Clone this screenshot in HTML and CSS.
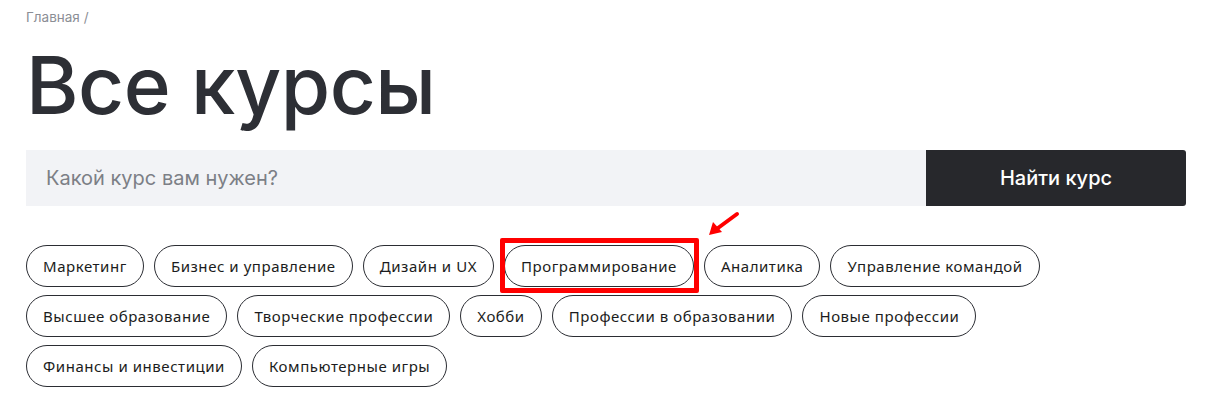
FILE: index.html
```html
<!DOCTYPE html>
<html lang="ru">
<head>
<meta charset="utf-8">
<title>Все курсы</title>
<link rel="stylesheet" href="styles.css">
</head>
<body>
<main class="page">
  <nav class="crumbs"><a href="#">Главная</a> <span>/</span></nav>
  <h1 class="title">Все курсы</h1>
  <form class="search">
    <input class="search-input" type="text" placeholder="Какой курс вам нужен?">
    <button class="search-btn" type="button">Найти курс</button>
  </form>
  <div class="chips">
    <a class="chip" href="#">Маркетинг</a>
    <a class="chip" href="#">Бизнес и управление</a>
    <a class="chip" href="#">Дизайн и UX</a>
    <a class="chip chip-marked" href="#">Программирование
      <svg class="arrow" width="40" height="32" viewBox="0 0 40 32"><path d="M33 4 L14 18" stroke="#f00" stroke-width="4" stroke-linecap="round"/><path d="M5 25 L9 12 L18 22 Z" fill="#f00"/></svg>
    </a>
    <a class="chip" href="#">Аналитика</a>
    <a class="chip" href="#">Управление командой</a>
    <a class="chip" href="#">Высшее образование</a>
    <a class="chip" href="#">Творческие профессии</a>
    <a class="chip" href="#">Хобби</a>
    <a class="chip" href="#">Профессии в образовании</a>
    <a class="chip" href="#">Новые профессии</a>
    <a class="chip" href="#">Финансы и инвестиции</a>
    <a class="chip" href="#">Компьютерные игры</a>
  </div>
</main>
</body>
</html>
```
FILE: styles.css
```css
* { box-sizing: border-box; }
html, body { margin: 0; padding: 0; background: #fff; }
body { font-family: "Noto Sans", "Open Sans", sans-serif; color: #2b2d33; }
.page { padding: 8px 32px 0 26px; }
.crumbs { font-family: Inter, sans-serif; font-size: 13.5px; line-height: 19px; color: #8b8e95; }
.crumbs a { color: #8b8e95; text-decoration: none; }
.title {
  margin: 10px 0 0 0;
  font-family: Inter, sans-serif;
  font-weight: 500;
  font-size: 80px;
  line-height: 96px;
  letter-spacing: -0.5px;
  color: #2d2f35;
}
.search { display: flex; margin-top: 17px; height: 56px; }
.search-input {
  flex: 1; border: 0; outline: 0;
  background: #f2f3f6; padding: 0 20px;
  font-family: Inter, sans-serif; font-size: 20px; color: #2b2d33;
}
.search-input::placeholder { color: #7c7f86; }
.search-btn {
  width: 260px; border: 0; border-radius: 0 3px 3px 0;
  background: #27282c; color: #fff;
  font-family: Inter, sans-serif; font-size: 20px; font-weight: 500;
}
.chips { display: flex; flex-wrap: wrap; gap: 8px 10px; margin-top: 39px; max-width: 1060px; }
.chip {
  position: relative;
  display: inline-flex; align-items: center;
  height: 42px; padding: 0 16px;
  border: 1px solid #2b2d33; border-radius: 21px;
  font-size: 15px; letter-spacing: 0.55px; color: #1b1c20; text-decoration: none; white-space: nowrap;
}
.chip-marked::before {
  content: ""; position: absolute;
  top: -8px; left: -5px; right: -6px; bottom: -7px;
  border: 5px solid #f00; border-radius: 2px;
}
.arrow { position: absolute; right: -51px; top: -36px; }
```
